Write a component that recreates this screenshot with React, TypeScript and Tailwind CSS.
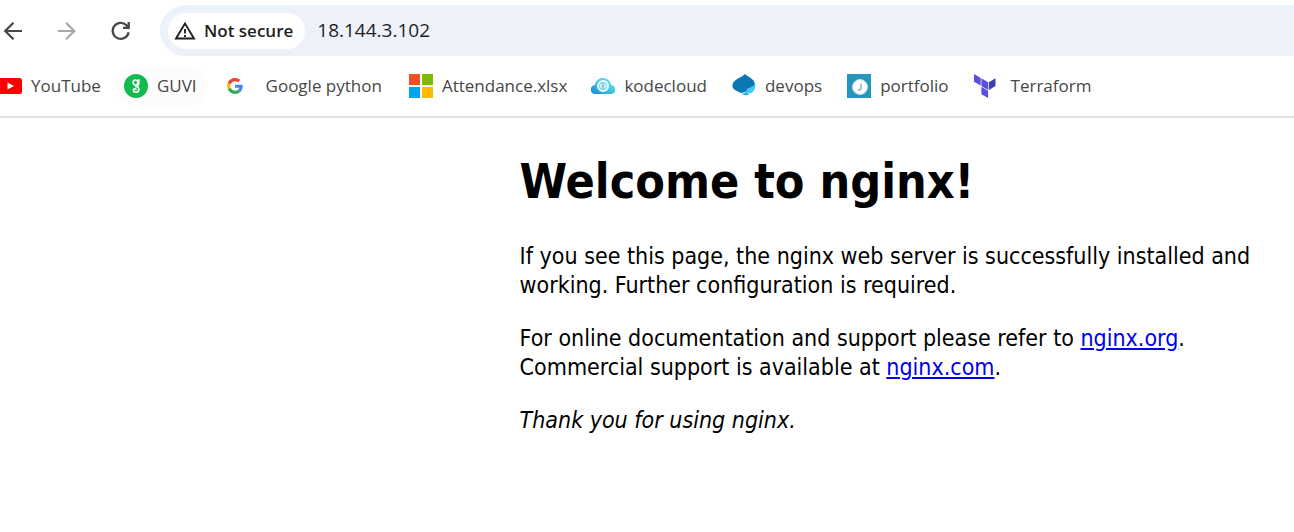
import type { ReactNode } from "react";

type Bookmark = { label: string; icon: ReactNode; style: string };

const YouTubeIcon = () => (
  <svg className="h-6 w-6 shrink-0" viewBox="0 0 24 24" aria-hidden="true">
    <rect x="0" y="4" width="24" height="16" rx="2.5" fill="#ff0000" />
    <path d="M9.500 8.500 16 12l-6.500 3.500z" fill="#fff" />
  </svg>
);

const GuviIcon = () => (
  <svg className="h-6 w-6 shrink-0" viewBox="0 0 24 24" aria-hidden="true">
    <circle cx="12" cy="12" r="12" fill="#11bb4d" />
    <g fill="none" stroke="#fff" strokeWidth="1.500" strokeLinecap="round">
      <circle cx="11.500" cy="8.500" r="2.400" />
      <path d="M14.800 5.800v3.400c0 2.400-1.500 3-3.200 3.400" />
      <path d="M11.600 12.600c4.800 0 4 5.600.4 5.600-2.800 0-3.400-2.800-1.600-3.400 1-.3 1.600.2 1.700.8" />
    </g>
  </svg>
);

const GoogleIcon = () => (
  <svg className="h-4 w-4 shrink-0" viewBox="0 0 48 48" aria-hidden="true">
    <path fill="#4285f4" d="M46.98 24.55c0-1.57-.15-3.09-.38-4.55H24v9.02h12.94c-.58 2.96-2.26 5.48-4.78 7.18l7.73 6c4.51-4.18 7.09-10.36 7.09-17.65z" />
    <path fill="#34a853" d="M24 48c6.48 0 11.93-2.13 15.89-5.81l-7.73-6c-2.15 1.45-4.92 2.3-8.16 2.3-6.26 0-11.57-4.22-13.47-9.91l-7.98 6.19C6.51 42.62 14.62 48 24 48z" />
    <path fill="#fbbc05" d="M10.53 28.59a14.5 14.5 0 0 1 0-9.18l-7.98-6.19a24 24 0 0 0 0 21.56z" />
    <path fill="#ea4335" d="M24 9.5c3.54 0 6.71 1.22 9.21 3.6l6.85-6.85C35.9 2.38 30.47 0 24 0 14.62 0 6.51 5.38 2.56 13.22l7.98 6.19C12.43 13.72 17.74 9.5 24 9.5z" />
  </svg>
);

const MicrosoftIcon = () => (
  <svg className="h-6 w-6 shrink-0" viewBox="0 0 24 24" aria-hidden="true">
    <path fill="#f25022" d="M0 0h11v11H0z" />
    <path fill="#7fba00" d="M13 0h11v11H13z" />
    <path fill="#00a4ef" d="M0 13h11v11H0z" />
    <path fill="#ffb900" d="M13 13h11v11H13z" />
  </svg>
);

const CloudIcon = () => (
  <svg className="h-6 w-6 shrink-0" viewBox="0 0 24 24" aria-hidden="true">
    <defs>
      <linearGradient id="cloud" x1="0" y1="1" x2="1" y2="0">
        <stop offset="0" stopColor="#1485dd" />
        <stop offset=".5" stopColor="#3fc3e0" />
        <stop offset="1" stopColor="#6fe8e2" />
      </linearGradient>
    </defs>
    <path fill="url(#cloud)" d="M4.500 20a4.500 4.500 0 0 1-.6-9C5 6.500 8.200 4 12 4s7 2.500 8.100 7a4.500 4.500 0 0 1-.6 9z" />
    <circle cx="12" cy="12" r="5" fill="#7dd2ec" stroke="#f2fdff" strokeWidth="2" />
    <path d="m10.800 9.800-1.600 2.200 1.600 2.200m2.400-4.400 1.600 2.200-1.600 2.200" fill="none" stroke="#f2fdff" strokeWidth="1.200" />
  </svg>
);

const DevopsIcon = () => (
  <svg className="h-6 w-6 shrink-0" viewBox="0 0 24 24" aria-hidden="true">
    <path fill="#0b78b6" d="M13 0c2 2.200 5.600 3.200 8 6 2.800 3.400 2.800 7.500.2 10-2 1.900-5 1.700-7 1.600L10 19c-2.500-.2-3-1.300-4.600-1.800C2.200 16.300.4 14.400.4 11.800.4 8.500 2.800 6.500 6 4.600 8.500 3.200 11.300 2 13 0z" />
    <path fill="#3fc8f2" d="M23 9.500c1 4.500-1 8.500-4.500 9.800-2.300.6-4-.8-4-2.700 0-3.600 6.700-2.600 8.500-7.100z" />
    <path fill="#1fb2e6" d="M9.500 20c2.300-.3 4-1.300 5.200-2.700.4 1.500 1.300 2.700 2.800 3.200-2.200 1-5.700.9-8-.5z" />
  </svg>
);

const PortfolioIcon = () => (
  <svg className="h-6 w-6 shrink-0" viewBox="0 0 24 24" aria-hidden="true">
    <path fill="#2596be" d="M0 0h24v24H0z" />
    <circle cx="13" cy="13" r="7.500" fill="#fff" stroke="#bce0ec" />
    <path d="M14 9.500v5c0 2-2.500 2-2.800.5" fill="none" stroke="#86c4da" strokeWidth="1.600" />
  </svg>
);

const TerraformIcon = () => (
  <svg className="h-6 w-6 shrink-0" viewBox="0 0 24 24" aria-hidden="true">
    <path fill="#5c4ee5" d="m1 0 6.700 3.900v7.700L1 7.700zm7.400 4.300 6.700 3.900v7.700L8.400 12zm0 8.500 6.700 3.900V24l-6.700-3.800z" />
    <path fill="#4040b2" d="m15.800 8.200 6.700-3.900V12l-6.700 3.900z" />
  </svg>
);

const bookmarks: Bookmark[] = [
  { label: "YouTube", icon: <YouTubeIcon />, style: "-ml-0.5 gap-[9px] pr-[15px]" },
  { label: "GUVI", icon: <GuviIcon />, style: "gap-[9px] rounded-full bg-[#fcfcfc] pr-[10px] pl-2" },
  { label: "Google python", icon: <GoogleIcon />, style: "gap-[23px] pr-[15px] pl-5" },
  { label: "Attendance.xlsx", icon: <MicrosoftIcon />, style: "gap-[9px] px-3" },
  { label: "kodecloud", icon: <CloudIcon />, style: "gap-[9px] pr-[13px] pl-3" },
  { label: "devops", icon: <DevopsIcon />, style: "gap-[9px] pr-[13px] pl-3" },
  { label: "portfolio", icon: <PortfolioIcon />, style: "gap-[9px] px-3" },
  { label: "Terraform", icon: <TerraformIcon />, style: "gap-[14px] px-3" },
];

function Toolbar() {
  return (
    <div className="flex items-center pt-[5px]">
      <nav aria-label="History" className="flex w-40 shrink-0 items-center gap-[30px]">
        <button type="button" aria-label="Back" className="text-[#474747]">
          <svg className="h-6 w-6" viewBox="0 0 24 24" fill="none" stroke="currentColor" strokeWidth="2.200">
            <path d="M22 12H5.500M13.500 3.700 5.200 12l8.300 8.300" />
          </svg>
        </button>
        <button type="button" aria-label="Forward" className="text-[#a9a9a9]">
          <svg className="h-6 w-6" viewBox="0 0 24 24" fill="none" stroke="currentColor" strokeWidth="2.200">
            <path d="M4 12h16.500M12 3.700l8.300 8.300-8.300 8.300" />
          </svg>
        </button>
        <button type="button" aria-label="Reload" className="text-[#474747]">
          <svg className="h-6 w-6" viewBox="0 0 24 24" fill="none" stroke="currentColor" strokeWidth="2.300">
            <path d="M20.600 13.200a8 8 0 1 1-2.200-7l2.200 2.300M20.700 3v5.800H15" />
          </svg>
        </button>
      </nav>
      <div className="flex h-[51px] min-w-0 flex-1 items-center gap-3 rounded-l-full bg-[#ecf1fa] pl-2 text-[#1f1f1f]">
        <button type="button" className="flex h-9 shrink-0 items-center gap-2 rounded-full bg-white pr-3 pl-[6px] text-[17px] font-semibold">
          <svg className="h-[22px] w-[22px]" viewBox="0 0 22 22" fill="none" stroke="currentColor" strokeWidth="1.900" aria-hidden="true">
            <path d="M11 3.500 2 18.500h18zM11 9v4.500M11 15v2" />
          </svg>
          Not secure
        </button>
        <input aria-label="Address" defaultValue="18.144.3.102" className="min-w-0 flex-1 bg-transparent text-[19px] outline-none" />
      </div>
    </div>
  );
}

export default function App() {
  return (
    <div className="min-h-screen overflow-hidden bg-white">
      <header className="border-b-2 border-[#e0e0e0] font-['Open_Sans','Noto_Sans',sans-serif]">
        <Toolbar />
        <nav aria-label="Bookmarks" className="flex items-center py-[10px] text-[17px] text-[#474747]">
          {bookmarks.map(({ label, icon, style }) => (
            <a key={label} href="#" className={`flex h-10 shrink-0 items-center whitespace-nowrap ${style}`}>
              {icon}
              {label}
            </a>
          ))}
        </nav>
      </header>
      <main className="ml-auto w-[60%] pt-[34px] pr-5 pl-0.5 font-['DejaVu_Sans_Condensed','DejaVu_Sans',sans-serif] text-[23px] leading-[29px] text-black">
        <h1 className="mb-8 text-5xl leading-[58px] font-bold">Welcome to nginx!</h1>
        <p className="mb-6">
          If you see this page, the nginx web server is successfully installed and working. Further configuration is required.
        </p>
        <p className="mb-6">
          For online documentation and support please refer to{" "}
          <a href="http://nginx.org/" className="text-[#0000ee] underline">nginx.org</a>.<br />
          Commercial support is available at{" "}
          <a href="http://nginx.com/" className="text-[#0000ee] underline">nginx.com</a>.
        </p>
        <p><em>Thank you for using nginx.</em></p>
      </main>
    </div>
  );
}
